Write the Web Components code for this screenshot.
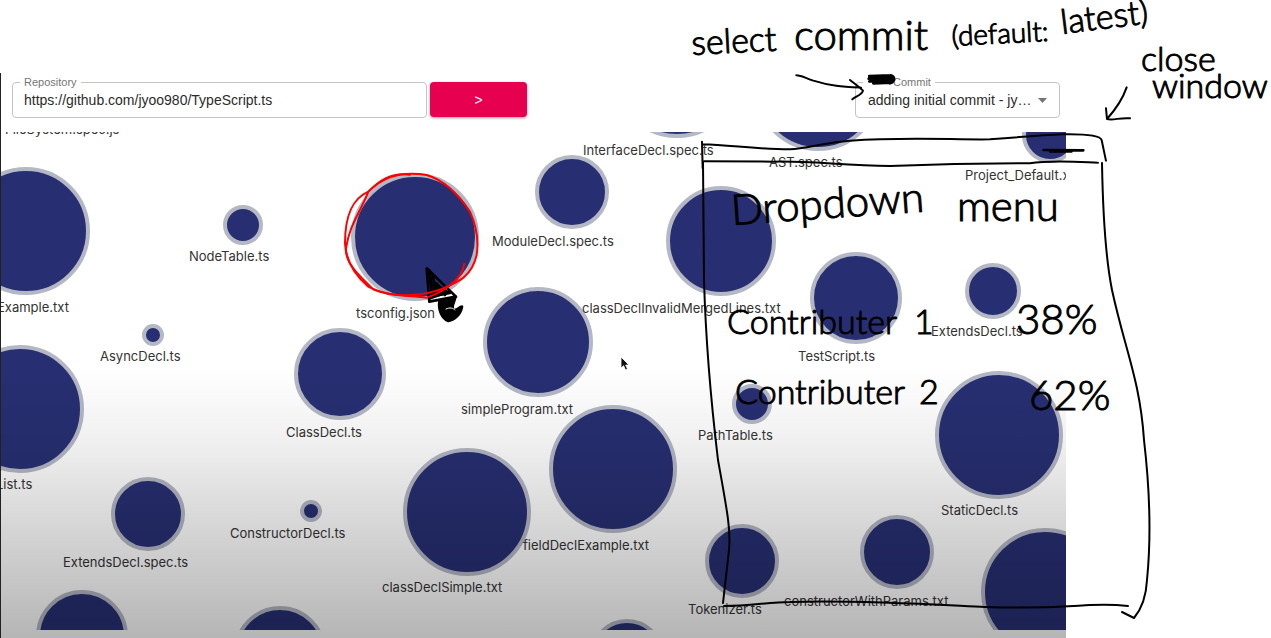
<!DOCTYPE html>
<html lang="en">
<head>
<meta charset="utf-8">
<title>Repository graph</title>
<style>
  body { margin: 0; background: #fff; font-family: "Liberation Sans", Arial, sans-serif; }
</style>
</head>
<body>
<review-board>
  <repo-app>
    <text-field slot="bar" label="Repository" value="https://github.com/jyoo980/TypeScript.ts"></text-field>
    <go-button slot="bar">&gt;</go-button>
    <commit-select slot="bar" label="Commit">adding initial commit - jy…</commit-select>
    <file-graph></file-graph>
  </repo-app>
  <ink-layer slot="ink"></ink-layer>
</review-board>

<script>
const define = (name, html, setup) => {
  const template = document.createElement('template');
  template.innerHTML = html;
  customElements.define(name, class extends HTMLElement {
    constructor() {
      super();
      this.attachShadow({ mode: 'open' }).append(template.content.cloneNode(true));
    }
    connectedCallback() { if (setup) setup(this, this.shadowRoot); }
  });
};

define('review-board', `
  <style>
    :host { display: block; position: relative; box-sizing: border-box; min-height: 100vh; padding: 73px 205px 0 0; overflow: hidden; }
  </style>
  <slot></slot><slot name="ink"></slot>`);

define('repo-app', `
  <style>
    :host { display: flex; flex-direction: column; position: relative; box-sizing: border-box;
      min-height: calc(100vh - 73px); padding-bottom: 8px; border-left: 1px solid #222; background: #fff; }
    header { display: flex; align-items: flex-start; gap: 3px; height: 50px; padding: 9px 6px 0 11px; }
    .shade { position: absolute; inset: 0; pointer-events: none;
      background: linear-gradient(rgba(0,0,0,0) 52%, rgba(0,0,0,.06) 65%, rgba(0,0,0,.14) 77%, rgba(0,0,0,.29) 100%); }
  </style>
  <header><slot name="bar"></slot></header>
  <slot></slot>
  <div class="shade"></div>`);

const fieldStyle = `
  :host { display: block; position: relative; box-sizing: border-box; height: 36px; border: 1px solid #c4c4c4; border-radius: 4px; }
  label { position: absolute; left: 7px; top: -8px; padding: 0 4px; background: #fff; color: #757575; font-size: 11px; line-height: 14px; }
  input, select { display: block; box-sizing: border-box; width: 100%; height: 34px; margin: 0; padding: 0 11px; border: 0; outline: 0;
    background: none; color: #2b2b2b; font: 14px/20px "Liberation Sans", Arial, sans-serif; appearance: none; }`;

define('text-field', `
  <style>${fieldStyle}
    :host { flex: 0 1 415px; }
  </style>
  <label for="f"></label><input id="f" type="text">`,
  (el, root) => {
    root.querySelector('label').textContent = el.getAttribute('label');
    root.querySelector('input').value = el.getAttribute('value');
  });

define('go-button', `
  <style>
    :host { display: block; flex: 0 0 97px; }
    button { display: block; width: 100%; height: 35px; padding: 0; border: 0; border-radius: 4px; background: #e6004f; color: #fff;
      font: 14px/20px "Liberation Sans", Arial, sans-serif; box-shadow: 0 1px 3px rgba(0,0,0,.4); }
  </style>
  <button type="button"><slot></slot></button>`);

define('commit-select', `
  <style>${fieldStyle}
    :host { flex: 0 0 205px; margin-left: auto; }
    label { padding-left: 30px; }
    select { padding: 0 12px; }
    svg { position: absolute; right: 12px; top: 15px; }
  </style>
  <label for="s"></label>
  <select id="s"><option></option></select>
  <svg width="9" height="5" viewBox="0 0 9 5"><path d="M0 0h9L4.500 5z" fill="#757575"/></svg>`,
  (el, root) => {
    root.querySelector('label').textContent = el.getAttribute('label');
    root.querySelector('option').textContent = el.textContent;
  });

define('file-node', `
  <style>
    :host { display: block; position: absolute; }
    .dot { position: absolute; box-sizing: border-box; border: 4px solid #b4b8c5; border-radius: 50%; background: #272f72; }
    .name { position: absolute; white-space: nowrap; font: 13px/16px Inter, Roboto, sans-serif; color: #333; }
  </style>
  <div class="dot"></div><div class="name"><slot></slot></div>`);

/* Node centre, radius, file name, and where the name starts. */
const files = [
  [26, 231, 64, 'Example.txt', -3, 307],
  [243, 225, 20, 'NodeTable.ts', 189, 256],
  [415, 237, 64, 'tsconfig.json', 356, 313],
  [677, 74, 64, 'InterfaceDecl.spec.ts', 583, 150],
  [572, 192, 37, 'ModuleDecl.spec.ts', 492, 241],
  [721, 241, 55, 'classDeclInvalidMergedLines.txt', 582, 308],
  [818, 87, 64, 'AST.spec.ts', 769, 162],
  [1050, 135, 28, 'Project_Default.xml', 965, 175],
  [856, 298, 46, 'TestScript.ts', 798, 356],
  [993, 291, 28, 'ExtendsDecl.ts', 931, 331],
  [153, 335, 11, 'AsyncDecl.ts', 100, 356],
  [20, 409, 64, 'List.ts', -4, 484],
  [340, 374, 46, 'ClassDecl.ts', 286, 432],
  [538, 342, 55, 'simpleProgram.txt', 461, 409],
  [613, 469, 64, 'fieldDeclExample.txt', 523, 545],
  [467, 512, 64, 'classDeclSimple.txt', 382, 587],
  [752, 404, 20, 'PathTable.ts', 698, 435],
  [999, 435, 64, 'StaticDecl.ts', 941, 510],
  [148, 514, 37, 'ExtendsDecl.spec.ts', 63, 562],
  [311, 511, 11, 'ConstructorDecl.ts', 230, 533],
  [742, 561, 37, 'Tokenizer.ts', 688, 609],
  [897, 552, 37, 'constructorWithParams.txt', 784, 601],
  [1045, 592, 64, '', 0, 0],
  [82, 636, 46, '', 0, 0],
  [280, 652, 46, '', 0, 0],
  [627, 656, 37, '', 0, 0],
  [62, 54, 64, 'FileSystem.spec.js', 5, 129]
];

define('file-graph', `
  <style>
    :host { display: block; position: relative; flex: 1 0 498px; overflow: hidden; }
    .plane { position: absolute; left: -1px; top: -132px; }
    .pointer { position: absolute; left: 620px; top: 356px; }
  </style>
  <div class="plane">
    <svg class="pointer" width="12" height="17" viewBox="0 0 12 17"><path d="M1 1v11l2.600-2.300 1.900 4.300 2-.9-1.800-4.100h3.300z" fill="#111" stroke="#fff" stroke-width=".8"/></svg>
  </div>`,
  (el, root) => {
    const plane = root.querySelector('.plane');
    for (const [x, y, r, name, tx, ty] of files) {
      const node = document.createElement('file-node');
      node.textContent = name;
      node.style.cssText = `left:${x}px;top:${y}px`;
      node.shadowRoot.querySelector('.dot').style.cssText = `left:${-r}px;top:${-r}px;width:${2 * r}px;height:${2 * r}px`;
      node.shadowRoot.querySelector('.name').style.cssText = `left:${tx - x}px;top:${ty - 8 - y}px`;
      plane.prepend(node);
    }
  });

define('ink-layer', `
  <style>
    :host { display: block; position: absolute; inset: 0; pointer-events: none; }
    svg { display: block; width: 100%; height: 100%; overflow: visible; }
    path { fill: none; stroke: #000; stroke-width: 2; stroke-linecap: round; stroke-linejoin: round; }
    .x3 path { stroke-width: 6; }
    .red path { stroke: #f00; }
    text { font-family: Lato, "Noto Sans", sans-serif; font-weight: 300; fill: #000; stroke: #000; stroke-width: 1; stroke-linejoin: round; }
    .s { font-size: 28px; }
    .m { font-size: 34px; }
    .l { font-size: 42px; }
  </style>
  <svg role="img" aria-label="Review notes">
    <text class="m" transform="translate(692 55) rotate(-3)">select</text>
    <text class="l" x="794" y="50">commit</text>
    <text class="s" transform="translate(952 46) rotate(-3)">(default:</text>
    <text class="m" transform="translate(1062 34) rotate(-7)">latest)</text>
    <text class="m" x="1141" y="71">close</text>
    <text class="m" x="1152" y="98">window</text>
    <text class="l" transform="translate(732 225) rotate(-4)">Dropdown</text>
    <text class="l" x="957" y="221">menu</text>
    <text class="m" x="727" y="334">Contributer</text>
    <text class="m" x="914" y="334">1</text>
    <text class="l" x="1016" y="334">38%</text>
    <text class="m" x="735" y="404">Contributer</text>
    <text class="m" x="919" y="404">2</text>
    <text class="l" x="1029" y="410">62%</text>

    <g class="x3" transform="translate(680 0) scale(.3333)">
      <path d="M349 226C362 226 372 232 400 242C450 258 490 260 543 263M510 240C525 252 540 262 549 272C547 284 530 288 517 298"/>
      <path d="M568 228L632 226M566 236L640 232M568 244L642 240M580 250L634 248M568 232L634 244M632 226C646 230 646 244 630 250" style="stroke-width:8"/>
    </g>
    <g class="x3" transform="translate(960 0) scale(.3333)">
      <path d="M500 262C487 300 465 330 441 357L438 325M441 357C460 362 480 352 510 355"/>
    </g>
    <g class="x3" transform="translate(690 120) scale(.3333)">
      <path d="M36 65L38 145M38 73C120 75 200 88 300 88C350 86 400 68 480 62C650 50 800 60 900 58C1000 50 1050 46 1120 43C1180 42 1230 45 1235 60L1248 122"/>
      <path d="M42 124L250 125C350 122 450 135 600 138C760 132 900 130 1020 130C1080 120 1150 125 1224 128"/>
      <path d="M1061 90L1180 91M1080 94L1145 94" style="stroke-width:8"/>
    </g>
    <path d="M703 162L704 280C706 350 712 410 718 460C727 510 731 530 729 550L723 603"/>
    <path d="M1102 163C1103 220 1106 260 1112 290C1125 350 1140 380 1144 440C1151 500 1150 550 1147 580C1146 600 1139 612 1134 618L1122 612"/>
    <path d="M724 606C750 606 770 602 790 602C860 600 940 605 985 607C1040 609 1070 606 1090 605C1110 604 1120 605 1128 606"/>
    <g class="x3" transform="translate(330 160) scale(.3333)">
      <path d="M290 325L298 425L378 410ZM298 330L308 410M308 350L325 405M320 370L345 405M300 415L355 395" style="stroke-width:8"/>
      <path d="M300 360L305 410L360 400Z" style="fill:#000"/>
      <path d="M328 425C325 450 335 475 355 483C375 480 392 462 396 440C386 440 384 454 370 450C362 436 376 425 376 410Z" style="fill:#000;stroke-width:8"/>
    </g>
    <path d="M446 309C450 307 453 308 455 310" style="stroke:#fff;stroke-width:1"/>
    <g class="x3 red" transform="translate(330 160) scale(.3333)">
      <path d="M240 44C180 38 150 60 115 95C70 115 45 160 45 250C48 310 80 350 115 380C160 404 200 405 290 413C330 400 395 365 403 312"/>
      <path d="M115 95C150 60 200 30 290 45C340 60 380 95 420 155C440 200 447 240 440 285C425 350 385 365 340 385C290 405 200 418 130 388C90 350 45 310 48 265C60 190 85 170 115 95"/>
    </g>
  </svg>`);
</script>
</body>
</html>
